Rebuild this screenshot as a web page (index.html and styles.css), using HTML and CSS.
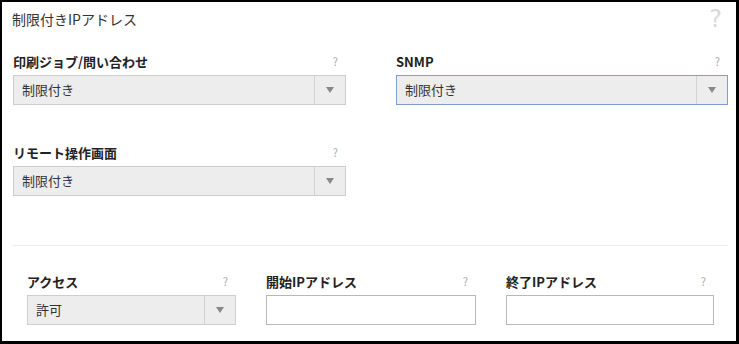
FILE: index.html
```html
<!DOCTYPE html>
<html lang="ja">
<head>
  <meta charset="UTF-8">
  <title>制限付きIPアドレス</title>
  <link rel="stylesheet" href="styles.css">
</head>
<body>
  <div class="frame">
    <!-- Header -->
    <div class="panel-head">
      <span class="panel-title">制限付きIPアドレス</span>
      <span class="panel-help">?</span>
    </div>

    <div class="panel-body">
      <!-- Restriction selects -->
      <div class="grid">
        <div class="field">
          <div class="field-label"><span>印刷ジョブ/問い合わせ</span><span class="help">?</span></div>
          <div class="select">
            <span class="select-value">制限付き</span>
            <span class="select-arrow"><i></i></span>
          </div>
        </div>
        <div class="field">
          <div class="field-label"><span>SNMP</span><span class="help">?</span></div>
          <div class="select focused">
            <span class="select-value">制限付き</span>
            <span class="select-arrow"><i></i></span>
          </div>
        </div>
        <div class="field">
          <div class="field-label"><span>リモート操作画面</span><span class="help">?</span></div>
          <div class="select">
            <span class="select-value">制限付き</span>
            <span class="select-arrow"><i></i></span>
          </div>
        </div>
      </div>

      <div class="separator"></div>

      <!-- Address range -->
      <div class="range">
        <div class="field">
          <div class="field-label"><span>アクセス</span><span class="help">?</span></div>
          <div class="select">
            <span class="select-value">許可</span>
            <span class="select-arrow"><i></i></span>
          </div>
        </div>
        <div class="field">
          <div class="field-label"><span>開始IPアドレス</span><span class="help">?</span></div>
          <input class="text-input" type="text">
        </div>
        <div class="field">
          <div class="field-label"><span>終了IPアドレス</span><span class="help">?</span></div>
          <input class="text-input" type="text">
        </div>
      </div>
    </div>
  </div>
</body>
</html>
```
FILE: styles.css
```css
/* ====== Page frame ====== */
body {
  margin: 0;
  background: #fff;
  font-family: "Noto Sans CJK JP", "Noto Sans", sans-serif;
  color: #333;
}
.frame {
  box-sizing: border-box;
  width: 739px;
  height: 344px;
  border: 2px solid #000;
  border-right-width: 3px;
  border-bottom-width: 3px;
  overflow: hidden;
}

/* Header */
.panel-head {
  display: flex;
  justify-content: space-between;
  align-items: center;
  padding: 5px 14px 0 10px;
  height: 23px;
}
.panel-title {
  font-size: 14px;
  line-height: 20px;
  color: #333;
}
.panel-help {
  font-family: "DejaVu Sans", sans-serif;
  font-size: 24px;
  color: #dadada;
  line-height: 24px;
}

/* Body */
.panel-body {
  padding: 21px 8px 0 11px;
}
.grid {
  display: grid;
  grid-template-columns: 333px 332px;
  column-gap: 50px;
  row-gap: 37px;
}
.field-label {
  display: flex;
  justify-content: space-between;
  align-items: center;
  height: 20px;
  margin-bottom: 4px;
  font-size: 13px;
  font-weight: bold;
  color: #222;
}
.help {
  font-size: 11px;
  font-weight: normal;
  color: #aaa;
  margin-right: 8px;
}

/* Select box */
.select {
  box-sizing: border-box;
  display: flex;
  height: 30px;
  border: 1px solid #cdcdcd;
  background: #ededed;
}
.select.focused {
  border-color: #7d9dd3;
}
.select-value {
  flex: 1;
  padding-left: 8px;
  font-size: 13px;
  line-height: 28px;
  color: #333;
}
.select-arrow {
  width: 30px;
  border-left: 1px solid #d2d2d2;
  display: flex;
  align-items: center;
  justify-content: center;
}
.select-arrow i {
  width: 0;
  height: 0;
  border-left: 4px solid transparent;
  border-right: 4px solid transparent;
  border-top: 6px solid #888;
}

.separator {
  height: 1px;
  background: #ececec;
  margin: 49px 0 25px;
}

/* Range row */
.range {
  display: grid;
  grid-template-columns: 209px 210px 208px;
  column-gap: 30px;
  padding: 0 14px;
}
.text-input {
  box-sizing: border-box;
  display: block;
  width: 100%;
  height: 30px;
  margin: 0;
  border: 1px solid #b8b8b8;
  background: #fff;
  outline: none;
}
```
